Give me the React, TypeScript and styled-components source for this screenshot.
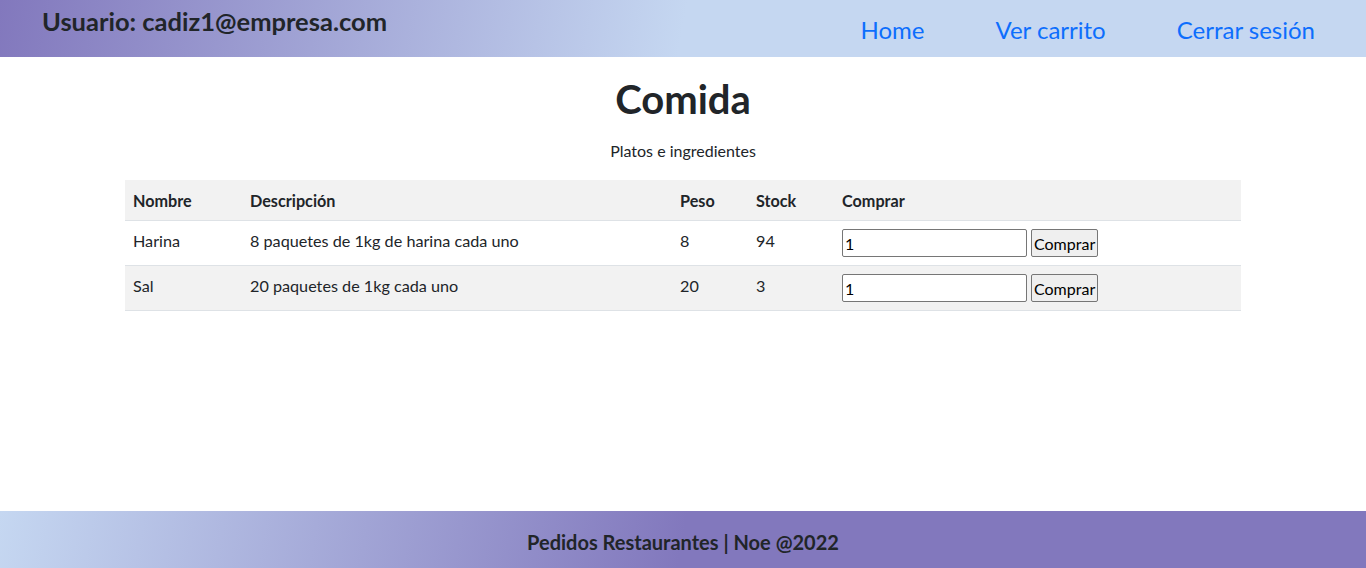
import React from "react";
import styled, { createGlobalStyle } from "styled-components";

const GlobalStyle = createGlobalStyle`
  html, body {
    margin: 0;
    padding: 0;
  }
  body {
    font-family: Lato, "Noto Sans", sans-serif;
    color: #212529;
    background: #fff;
  }
`;

interface IProducto {
  nombre: string;
  descripcion: string;
  peso: number;
  stock: number;
}

const productos: IProducto[] = [
  { nombre: "Harina", descripcion: "8 paquetes de 1kg de harina cada uno", peso: 8, stock: 94 },
  { nombre: "Sal", descripcion: "20 paquetes de 1kg cada uno", peso: 20, stock: 3 },
];

const App = () => {
  return (
    <>
      <GlobalStyle />
      <Page>
        <Header>
          <UserTitle>Usuario: cadiz1@empresa.com</UserTitle>
          <Nav>
            <NavLink href="#">Home</NavLink>
            <NavLink href="#">Ver carrito</NavLink>
            <NavLink href="#">Cerrar sesión</NavLink>
          </Nav>
        </Header>

        <Main>
          <Title>Comida</Title>
          <Subtitle>Platos e ingredientes</Subtitle>
          <Table>
            <thead>
              <tr>
                <Th>Nombre</Th>
                <Th>Descripción</Th>
                <Th>Peso</Th>
                <Th>Stock</Th>
                <Th>Comprar</Th>
              </tr>
            </thead>
            <tbody>
              {productos.map((p, i) => (
                <Row key={p.nombre} striped={i % 2 === 1}>
                  <Td>{p.nombre}</Td>
                  <Td>{p.descripcion}</Td>
                  <Td>{p.peso}</Td>
                  <Td>{p.stock}</Td>
                  <Td>
                    <BuyForm onSubmit={(e) => e.preventDefault()}>
                      <QtyInput type="number" defaultValue={1} />
                      <BuyBtn type="submit">Comprar</BuyBtn>
                    </BuyForm>
                  </Td>
                </Row>
              ))}
            </tbody>
          </Table>
        </Main>

        <Footer>Pedidos Restaurantes | Noe @2022</Footer>
      </Page>
    </>
  );
};

export default App;

const Page = styled.div`
  min-height: 100vh;
  display: flex;
  flex-direction: column;
`;

const Header = styled.header`
  height: 57px;
  display: flex;
  justify-content: space-between;
  align-items: flex-start;
  padding: 0 51px 0 42px;
  background: linear-gradient(100deg, #8278bd 0%, #c5d7f1 50%, #c5d7f1 100%);
`;

const UserTitle = styled.h4`
  margin: 0;
  padding-top: 6px;
  font-size: 25.5px;
  font-weight: 700;
  line-height: 30px;
`;

const Nav = styled.nav`
  display: flex;
  gap: 71px;
  padding-top: 14px;
`;

const NavLink = styled.a`
  font-size: 24px;
  line-height: 32px;
  color: #0d6efd;
  text-decoration: none;
`;

const Main = styled.main`
  flex: 1;
  width: 1116px;
  margin: 0 auto;
  display: flex;
  flex-direction: column;
  align-items: center;
`;

const Title = styled.h1`
  margin: 18px 0 0;
  font-size: 40px;
  font-weight: 700;
  line-height: 48px;
`;

const Subtitle = styled.p`
  margin: 16px 0 17px;
  font-size: 16px;
  line-height: 24px;
`;

const Table = styled.table`
  width: 100%;
  border-collapse: collapse;
  font-size: 16.2px;
`;

const Th = styled.th`
  text-align: left;
  padding: 8px;
  height: 24px;
  background: #f2f2f2;
  font-weight: 700;
  border-bottom: 1px solid #dee2e6;
  &:nth-child(1) { width: 101px; }
  &:nth-child(2) { width: 414px; }
  &:nth-child(3) { width: 60px; }
  &:nth-child(4) { width: 70px; }
`;

const Row = styled.tr<{ striped?: boolean }>`
  background: ${(p) => (p.striped ? "#f2f2f2" : "#fff")};
`;

const Td = styled.td`
  padding: 8px;
  vertical-align: top;
  line-height: 24px;
  border-bottom: 1px solid #dee2e6;
`;

const BuyForm = styled.form`
  display: flex;
  gap: 4px;
  margin: 0;
`;

const QtyInput = styled.input`
  width: 185px;
  height: 28px;
  box-sizing: border-box;
  padding: 1px 2px;
  border: 1px solid #767676;
  border-radius: 2px;
  font-family: inherit;
  font-size: 16px;
  color: #000;
  background: #fff;
  -moz-appearance: textfield;
  &::-webkit-inner-spin-button,
  &::-webkit-outer-spin-button {
    -webkit-appearance: none;
    margin: 0;
  }
`;

const BuyBtn = styled.button`
  height: 28px;
  box-sizing: border-box;
  padding: 1px 2px;
  border: 1px solid #767676;
  border-radius: 2px;
  background: #efefef;
  font-family: inherit;
  font-size: 16px;
  color: #000;
`;

const Footer = styled.footer`
  height: 57px;
  box-sizing: border-box;
  padding-top: 5px;
  display: flex;
  align-items: center;
  justify-content: center;
  font-size: 20px;
  font-weight: 700;
  background: linear-gradient(100deg, #c5d7f1 0%, #8278bd 50%, #8278bd 100%);
`;
